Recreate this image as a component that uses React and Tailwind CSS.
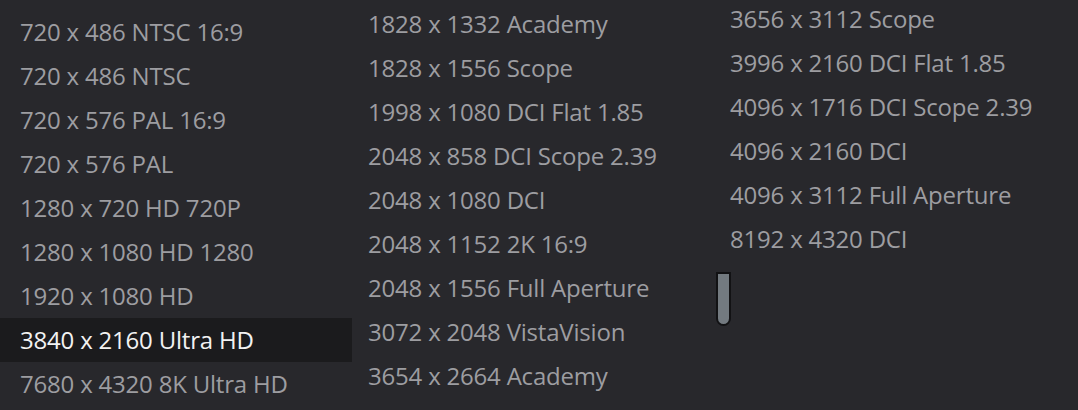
const col1 = [
    '720 x 486 NTSC 16:9',
    '720 x 486 NTSC',
    '720 x 576 PAL 16:9',
    '720 x 576 PAL',
    '1280 x 720 HD 720P',
    '1280 x 1080 HD 1280',
    '1920 x 1080 HD',
    '3840 x 2160 Ultra HD',
    '7680 x 4320 8K Ultra HD',
];

const col2 = [
    '1828 x 1332 Academy',
    '1828 x 1556 Scope',
    '1998 x 1080 DCI Flat 1.85',
    '2048 x 858 DCI Scope 2.39',
    '2048 x 1080 DCI',
    '2048 x 1152 2K 16:9',
    '2048 x 1556 Full Aperture',
    '3072 x 2048 VistaVision',
    '3654 x 2664 Academy',
];

const col3 = [
    '3656 x 3112 Scope',
    '3996 x 2160 DCI Flat 1.85',
    '4096 x 1716 DCI Scope 2.39',
    '4096 x 2160 DCI',
    '4096 x 3112 Full Aperture',
    '8192 x 4320 DCI',
];

const selected = '3840 x 2160 Ultra HD';

function Column({ items, className, pad }) {
    return (
        <ul className={className}>
            {items.map((label) => (
                <li
                    key={label}
                    className={
                        'h-[44px] flex items-center whitespace-nowrap ' +
                        pad +
                        ' ' +
                        (label === selected ? 'bg-[#1b1b1d] text-[#f2f2f2]' : 'text-[#9d9da1]')
                    }
                >
                    {label}
                </li>
            ))}
        </ul>
    );
}

export default function App() {
    return (
        <div
            className="relative w-[1078px] h-[410px] overflow-hidden bg-[#28282c] text-[24px] leading-none tracking-[-0.2px]"
            style={{ fontFamily: '"Open Sans", "Noto Sans", sans-serif' }}
        >
            <div className="flex">
                <Column items={col1} className="w-[352px] mt-[10px]" pad="pl-[20px]" />
                <Column items={col2} className="w-[362px] mt-[2px]" pad="pl-[16px]" />
                <Column items={col3} className="flex-1 -mt-[3px]" pad="pl-[16px]" />
            </div>
            <div className="absolute left-[716px] top-[272px] w-[15px] h-[54px] rounded-b-full border-2 border-[#121214] bg-[#737a80]" />
        </div>
    );
}
